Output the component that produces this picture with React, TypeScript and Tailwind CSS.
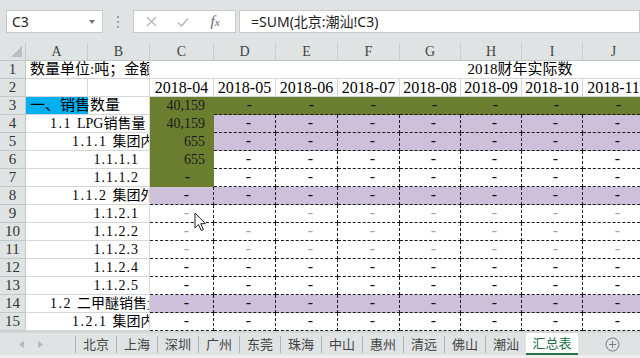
import React from 'react';

const SERIF = "font-['Liberation_Serif','Noto_Sans_CJK_SC',serif]";
const UI = "font-['Noto_Sans','Noto_Sans_CJK_SC',sans-serif]";

const COLS = ['C', 'D', 'E', 'F', 'G', 'H', 'I', 'J'];
const WIDTHS = ['w-[64px]', 'w-[62px]', 'w-[62px]', 'w-[62px]', 'w-[61px]', 'w-[61px]', 'w-[61px]', 'w-[62px]'];
const DATES = ['2018-04', '2018-05', '2018-06', '2018-07', '2018-08', '2018-09', '2018-10', '2018-11'];
const TABS = ['北京', '上海', '深圳', '广州', '东莞', '珠海', '中山', '惠州', '清远', '佛山', '潮汕'];

type Fill = 'g' | 'p' | 'w';
type RowData = {
  n: number;
  num: string;
  text: string;
  align: 'left' | 'right';
  pad: string;
  c: string;
  cBg: Fill;
  rest: Fill;
  tone: 'k' | 'g';
};

const ROWS: RowData[] = [
  { n: 3, num: '', text: '一、销售数量', align: 'left', pad: 'pl-[4px]', c: '40,159', cBg: 'g', rest: 'g', tone: 'k' },
  { n: 4, num: '1.1 ', text: 'LPG销售量', align: 'left', pad: 'pl-[24px]', c: '40,159', cBg: 'g', rest: 'p', tone: 'k' },
  { n: 5, num: '1.1.1 ', text: '集团内销售', align: 'left', pad: 'pl-[46px]', c: '655', cBg: 'g', rest: 'p', tone: 'k' },
  { n: 6, num: '1.1.1.1', text: '', align: 'right', pad: 'pr-[10px]', c: '655', cBg: 'g', rest: 'w', tone: 'k' },
  { n: 7, num: '1.1.1.2', text: '', align: 'right', pad: 'pr-[10px]', c: '-', cBg: 'g', rest: 'w', tone: 'k' },
  { n: 8, num: '1.1.2 ', text: '集团外销售', align: 'left', pad: 'pl-[46px]', c: '-', cBg: 'p', rest: 'p', tone: 'k' },
  { n: 9, num: '1.1.2.1', text: '', align: 'right', pad: 'pr-[10px]', c: '-', cBg: 'w', rest: 'w', tone: 'g' },
  { n: 10, num: '1.1.2.2', text: '', align: 'right', pad: 'pr-[10px]', c: '-', cBg: 'w', rest: 'w', tone: 'g' },
  { n: 11, num: '1.1.2.3', text: '', align: 'right', pad: 'pr-[10px]', c: '-', cBg: 'w', rest: 'w', tone: 'g' },
  { n: 12, num: '1.1.2.4', text: '', align: 'right', pad: 'pr-[10px]', c: '-', cBg: 'w', rest: 'w', tone: 'k' },
  { n: 13, num: '1.1.2.5', text: '', align: 'right', pad: 'pr-[10px]', c: '-', cBg: 'w', rest: 'w', tone: 'k' },
  { n: 14, num: '1.2 ', text: '二甲醚销售量', align: 'left', pad: 'pl-[24px]', c: '-', cBg: 'p', rest: 'p', tone: 'k' },
  { n: 15, num: '1.2.1 ', text: '集团内销售', align: 'left', pad: 'pl-[46px]', c: '-', cBg: 'w', rest: 'w', tone: 'k' },
];

const fillClass = (f: Fill) => (f === 'g' ? 'bg-[#6b7e30]' : f === 'p' ? 'bg-[#ccc0da]' : 'bg-white');

function RowHead({ n }: { n: number }) {
  return (
    <div className="w-[26px] shrink-0 bg-[#dfe3e3] border-r border-b border-[#c2c8c8] text-center text-[15px] leading-[17px] text-[#333]">
      {n}
    </div>
  );
}

function FormulaBar() {
  return (
    <div className={`h-[43px] flex items-start pt-[10px] pl-[6px] ${UI}`}>
      <div className="w-[97px] h-[23px] shrink-0 bg-white border border-[#c6caca] flex items-center justify-between pl-[5px] pr-[7px] text-[14px] text-[#222]">
        <span>C3</span>
        <svg width="6" height="4" viewBox="0 0 6 4">
          <path d="M0 0 L6 0 L3 4 Z" fill="#777" />
        </svg>
      </div>
      <div className="w-[30px] h-[23px] shrink-0 flex flex-col items-center justify-center gap-[3px]">
        <div className="w-[2px] h-[2px] bg-[#9aa0a0]" />
        <div className="w-[2px] h-[2px] bg-[#9aa0a0]" />
        <div className="w-[2px] h-[2px] bg-[#9aa0a0]" />
      </div>
      <div className="w-[103px] h-[23px] shrink-0 bg-white border border-[#c6caca] flex items-center pl-[1px]">
        <div className="w-[32px] flex justify-center">
          <svg width="11" height="11" viewBox="0 0 11 11">
            <path d="M1 1 L10 10 M10 1 L1 10" stroke="#b4b4b4" strokeWidth="1.2" />
          </svg>
        </div>
        <div className="w-[32px] flex justify-center">
          <svg width="12" height="10" viewBox="0 0 12 10">
            <path d="M1 5.5 L4.5 9 L11 1.5" stroke="#b4b4b4" strokeWidth="1.3" fill="none" />
          </svg>
        </div>
        <div className="w-[32px] flex justify-center">
          <span className="font-['Liberation_Serif',serif] italic text-[15px] leading-[16px] text-[#666]">
            f<span className="text-[11px]">x</span>
          </span>
        </div>
      </div>
      <div className="ml-[3px] flex-1 h-[23px] bg-white border border-[#c6caca] flex items-center pl-[11px] text-[14px] text-[#222]">
        =SUM(北京:潮汕!C3)
      </div>
    </div>
  );
}

function HeaderRow() {
  return (
    <div className="flex h-[18px] bg-[#dfe3e3] border-b border-[#c2c8c8] text-[14px] leading-[17px] text-[#444]">
      <div className="w-[26px] shrink-0 border-r border-[#c2c8c8] flex items-end justify-end pr-[3px] pb-[3px]">
        <svg width="11" height="11" viewBox="0 0 11 11">
          <path d="M11 0 L11 11 L0 11 Z" fill="#b8bebe" />
        </svg>
      </div>
      <div className="w-[62px] shrink-0 border-r border-[#c9cece] text-center">A</div>
      <div className="w-[62px] shrink-0 border-r border-[#c9cece] text-center">B</div>
      {COLS.map((c, i) => (
        <div key={c} className={`${WIDTHS[i]} shrink-0 border-r border-[#c9cece] text-center`}>
          {c}
        </div>
      ))}
    </div>
  );
}

function Row1() {
  return (
    <div className="flex h-[18px] bg-white text-[15px] leading-[17px] text-black">
      <RowHead n={1} />
      <div className="w-[124px] shrink-0 overflow-hidden whitespace-nowrap pl-[4px] border-r border-b border-[#d6d6d6]">
        数量单位:吨；金额单位:元
      </div>
      <div className="flex-1 min-w-0 overflow-hidden border-b border-[#d6d6d6]">
        <div className="w-[740px] text-center whitespace-nowrap">2018财年实际数</div>
      </div>
    </div>
  );
}

function Row2() {
  return (
    <div className="flex h-[18px] bg-white text-[16px] leading-[17px] text-black">
      <RowHead n={2} />
      <div className="w-[62px] shrink-0 border-r border-b border-[#d6d6d6]" />
      <div className="w-[62px] shrink-0 border-r border-b border-[#d6d6d6]" />
      {DATES.map((d, i) => (
        <div key={d} className={`${WIDTHS[i]} shrink-0 border-r border-b border-[#d6d6d6] text-center whitespace-nowrap`}>
          {d}
        </div>
      ))}
    </div>
  );
}

function DataRow({ r }: { r: RowData }) {
  return (
    <div className="flex h-[18px] bg-white text-[14px] leading-[17px] text-black">
      <RowHead n={r.n} />
      <div className="w-[124px] shrink-0 flex overflow-hidden whitespace-nowrap border-r border-b border-[#d6d6d6]">
        {r.n === 3 ? (
          <div className="w-[62px] shrink-0 bg-[#00b0f0] pl-[4px] text-[15px]">{r.text}</div>
        ) : r.align === 'right' ? (
          <div className={`w-full text-right tracking-[1px] ${r.pad}`}>{r.num}</div>
        ) : (
          <div className={`w-full ${r.pad}`}>
            <span className="tracking-[1.5px] whitespace-pre">{r.num}</span>
            {r.text}
          </div>
        )}
      </div>
      {COLS.map((col, i) => {
        const isC = i === 0;
        const fill = isC ? r.cBg : r.rest;
        const dashedRight = isC ? r.n >= 8 : r.n >= 4;
        const dashedBottom = isC ? r.n >= 8 : true;
        const text = isC ? r.c : r.n === 9 && col === 'D' ? '' : '-';
        const isDash = text === '-';
        const tone = r.tone === 'g' ? 'text-[#a3a3a3]' : 'text-[#111]';
        return (
          <div
            key={col}
            className={`${WIDTHS[i]} shrink-0 ${fillClass(fill)} ${dashedRight ? 'border-r' : ''} ${
              dashedBottom ? 'border-b' : ''
            } border-dashed border-[#1a1a1a] text-right whitespace-nowrap ${
              isDash ? `pr-[24px] text-[16px] leading-[16px] ${tone}` : 'pr-[9px] text-[#1a1a1a]'
            }`}
          >
            {text}
          </div>
        );
      })}
    </div>
  );
}

function Tabs() {
  return (
    <div className={`flex h-[22px] bg-[#dfe3e3] ${UI}`}>
      <div className="w-[75px] shrink-0 flex items-center pl-[19px] gap-[14px]">
        <svg width="5" height="7" viewBox="0 0 5 7">
          <path d="M5 0 L5 7 L0 3.5 Z" fill="#b3b8b8" />
        </svg>
        <svg width="5" height="7" viewBox="0 0 5 7">
          <path d="M0 0 L0 7 L5 3.5 Z" fill="#b3b8b8" />
        </svg>
      </div>
      {TABS.map((t) => (
        <div key={t} className="w-[41px] shrink-0 flex items-center">
          <div className="w-[1px] h-[17px] bg-[#aeb3b3]" />
          <div className="flex-1 text-center text-[13px] leading-[16px] text-[#444]">{t}</div>
        </div>
      ))}
      <div className="w-[52px] shrink-0 bg-white border-b-2 border-[#217346] flex items-center justify-center text-[13px] leading-[16px] text-[#217346]">
        汇总表
      </div>
      <div className="ml-[27px] flex items-center">
        <svg width="15" height="15" viewBox="0 0 15 15">
          <circle cx="7.5" cy="7.5" r="6.5" stroke="#7a7e7e" strokeWidth="1" fill="none" />
          <path d="M7.5 4 L7.5 11 M4 7.5 L11 7.5" stroke="#7a7e7e" strokeWidth="1" />
        </svg>
      </div>
    </div>
  );
}

function Cursor() {
  return (
    <div className="absolute left-[194px] top-[212px]">
      <svg width="13" height="20" viewBox="0 0 13 20">
        <path
          d="M1 1 L1 16 L4.5 12.5 L7.2 18.5 L9.4 17.5 L6.8 11.7 L11.5 11.7 Z"
          fill="white"
          stroke="#222"
          strokeWidth="1"
          strokeLinejoin="round"
        />
      </svg>
    </div>
  );
}

export default function App() {
  return (
    <div className="relative w-[640px] h-[358px] overflow-hidden bg-[#dfe3e3] select-none">
      <FormulaBar />
      <div className={`flex flex-col ${SERIF}`}>
        <HeaderRow />
        <Row1 />
        <Row2 />
        {ROWS.map((r) => (
          <DataRow key={r.n} r={r} />
        ))}
      </div>
      <div className="h-[2px] bg-[#d2d7d7]" />
      <Tabs />
      <div className="h-[3px] bg-[#f2eded]" />
      <Cursor />
    </div>
  );
}
